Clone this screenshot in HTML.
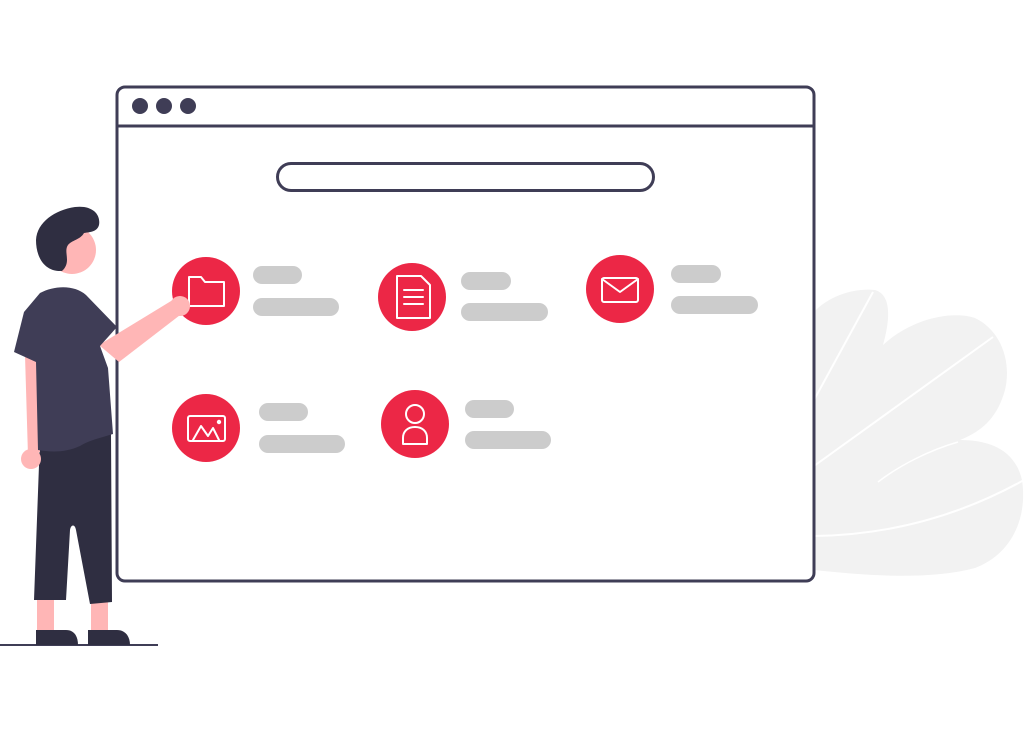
<!DOCTYPE html>
<html><head><meta charset="utf-8"><style>html,body{margin:0;padding:0;background:#fff}svg{display:block}</style></head>
<body>
<svg width="1024" height="732" viewBox="0 0 1024 732" xmlns="http://www.w3.org/2000/svg">
<path d="M814 312 C830 295 855 288 875 290 C892 295 890 320 883 345 C910 320 950 310 975 318 C1000 330 1012 360 1005 390 C998 415 985 430 960 440 C990 440 1015 450 1022 480 C1028 520 1010 555 975 568 C930 580 870 576 814 570 Z" fill="#f2f2f2"/>
<path d="M873 292 L814 400" stroke="#fff" stroke-width="2" fill="none"/>
<path d="M993 337 L814 466" stroke="#fff" stroke-width="2" fill="none"/>
<path d="M1024 480 C970 510 900 535 814 536" stroke="#fff" stroke-width="2" fill="none"/>
<path d="M958 442 C930 450 900 465 878 482" stroke="#fff" stroke-width="1.5" fill="none"/>
<rect x="117" y="87" width="697" height="494" rx="8" fill="#fff" stroke="#3f3d56" stroke-width="3"/>
<line x1="117" y1="126" x2="814" y2="126" stroke="#3f3d56" stroke-width="3"/>
<circle cx="140" cy="106" r="8" fill="#3f3d56"/><circle cx="164" cy="106" r="8" fill="#3f3d56"/><circle cx="188" cy="106" r="8" fill="#3f3d56"/>
<rect x="277.5" y="163.5" width="376" height="27" rx="13.5" fill="#fff" stroke="#3f3d56" stroke-width="3"/>
<g fill="#cccccc">
<rect x="253" y="266" width="49" height="18" rx="9"/><rect x="253" y="298" width="86" height="18" rx="9"/>
<rect x="461" y="272" width="50" height="18" rx="9"/><rect x="461" y="303" width="87" height="18" rx="9"/>
<rect x="671" y="265" width="50" height="18" rx="9"/><rect x="671" y="296" width="87" height="18" rx="9"/>
<rect x="259" y="403" width="49" height="18" rx="9"/><rect x="259" y="435" width="86" height="18" rx="9"/>
<rect x="465" y="400" width="49" height="18" rx="9"/><rect x="465" y="431" width="86" height="18" rx="9"/>
</g>
<g fill="#ec2746">
<circle cx="206" cy="291" r="34"/><circle cx="412" cy="297" r="34"/><circle cx="620" cy="289" r="34"/>
<circle cx="206" cy="428" r="34"/><circle cx="415" cy="424" r="34"/>
</g>
<g fill="none" stroke="#fff" stroke-width="2" stroke-linejoin="round" stroke-linecap="round">
<path d="M189 277 H201 L205 282 H224 V306 H189 Z"/>
<path d="M397 276 H421 L430 285 V318 H397 Z"/>
<path d="M404 290 H423 M404 297 H423 M404 304 H423"/>
<rect x="602" y="278" width="36" height="24" rx="2"/>
<path d="M602 279 L620 292 L638 279"/>
<rect x="188" y="416" width="37" height="25" rx="2"/>
<path d="M193 440 L201 426 L208 436 L213 428 L219 440"/>
<circle cx="219" cy="422" r="1.2" fill="#fff"/>
<circle cx="415" cy="414" r="9"/>
<path d="M403 444 V438 C403 431 408 427 415 427 C422 427 427 431 427 438 V444 Z"/>
</g>
<line x1="0" y1="645" x2="158" y2="645" stroke="#3f3d56" stroke-width="2"/>
<rect x="37" y="598" width="17" height="34" fill="#ffb6b6"/>
<rect x="91" y="598" width="17" height="34" fill="#ffb6b6"/>
<path d="M36 645 V630 H66 C74 630 78 636 78 645 Z" fill="#2f2e41"/>
<path d="M88 645 V630 H117 C125 630 130 636 130 645 Z" fill="#2f2e41"/>
<path d="M40 438 L111 434 L112 602 L90 604 L76 530 C75 524 71 524 70 530 L66 600 L34 600 Z" fill="#2f2e41"/>
<path d="M25 355 L38 355 L40 452 L28 456 Z" fill="#ffb6b6"/>
<circle cx="31" cy="459" r="10" fill="#ffb6b6"/>
<path d="M99 345 L176 298 L184 312 L119 362 Z" fill="#ffb6b6"/>
<circle cx="180" cy="306" r="10" fill="#ffb6b6"/>
<path d="M40 293 C55 285 75 285 86 295 L117 327 L100 346 L108 368 L113 434 C100 438 90 440 80 446 C65 453 50 452 38 450 L36 362 L14 352 L24 312 Z" fill="#3f3d56"/>
<circle cx="72" cy="250" r="24" fill="#ffb6b6"/>
<path d="M62 271 C45 272 36 258 36 240 C37 222 55 210 75 207 C92 205 101 214 99 225 C97 232 90 232 84 233 C80 240 72 240 68 245 C63 252 72 262 62 271 Z" fill="#2f2e41"/>
</svg>
</body></html>
